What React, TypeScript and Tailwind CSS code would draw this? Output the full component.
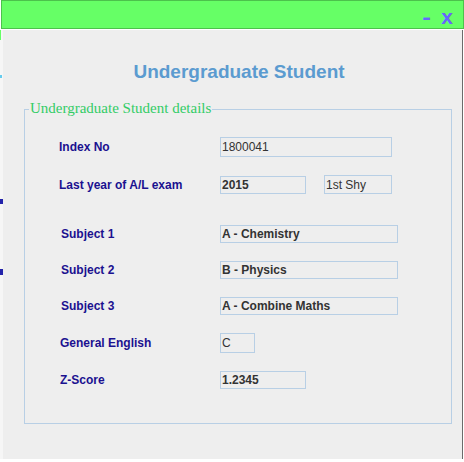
import React from "react";

type Row = {
  label: string;
  labelClass: string;
  rowClass: string;
  fields: { text: string; className: string }[];
};

const rows: Row[] = [
  {
    label: "Index No",
    labelClass: "pl-[34px] w-[195px]",
    rowClass: "mt-[27px] h-[20px] items-center",
    fields: [{ text: "1800041", className: "w-[172px] h-[20px]" }],
  },
  {
    label: "Last year of A/L exam",
    labelClass: "pl-[34px] w-[195px] self-center",
    rowClass: "mt-[18px] h-[19px] items-end",
    fields: [
      { text: "2015", className: "w-[86px] h-[18px] font-bold" },
      { text: "1st Shy", className: "ml-[18px] w-[68px] h-[19px]" },
    ],
  },
  {
    label: "Subject 1",
    labelClass: "pl-[36px] w-[195px]",
    rowClass: "mt-[31px] h-[18px] items-center",
    fields: [{ text: "A - Chemistry", className: "w-[178px] h-[18px] font-bold" }],
  },
  {
    label: "Subject 2",
    labelClass: "pl-[36px] w-[195px]",
    rowClass: "mt-[18px] h-[18px] items-center",
    fields: [{ text: "B - Physics", className: "w-[178px] h-[18px] font-bold" }],
  },
  {
    label: "Subject 3",
    labelClass: "pl-[36px] w-[195px]",
    rowClass: "mt-[18px] h-[18px] items-center",
    fields: [{ text: "A - Combine Maths", className: "w-[178px] h-[18px] font-bold" }],
  },
  {
    label: "General English",
    labelClass: "pl-[35px] w-[195px]",
    rowClass: "mt-[18px] h-[20px] items-center",
    fields: [{ text: "C", className: "w-[35px] h-[20px]" }],
  },
  {
    label: "Z-Score",
    labelClass: "pl-[35px] w-[195px]",
    rowClass: "mt-[18px] h-[18px] items-center",
    fields: [{ text: "1.2345", className: "w-[86px] h-[18px] font-bold" }],
  },
];

export default function App() {
  return (
    <div className="w-[464px] h-[462px] bg-white flex flex-col overflow-hidden font-['Liberation_Sans',Arial,sans-serif]">
      {/* title bar */}
      <div className="h-[29px] ml-[1px] bg-[#66ff66] border border-[#4cc24c] flex items-baseline justify-end pr-[10px] pt-[5px] text-[#6666ff] font-bold text-[21px] leading-[22px]">
        <span className="scale-x-125">-</span>
        <span className="ml-[11px]">x</span>
      </div>
      <div className="h-[1px]" />

      <div className="flex h-[429px]">
        <div className="w-[3px] bg-[#f6f6f6] flex flex-col">
          <div className="h-[10px] w-[1px] bg-[#66ff66]" />
          <div className="mt-[35px] h-[3px] w-[2px] bg-[#66ccee]" />
          <div className="mt-[121px] h-[5px] w-[3px] bg-[#2222aa]" />
          <div className="mt-[65px] h-[6px] w-[3px] bg-[#2222aa]" />
        </div>

        <div className="w-[459px] bg-[#eeeeee] flex flex-col">
          <div className="mt-[31px] h-[22px] pl-[13px] text-center text-[19px] leading-[22px] font-bold text-[#5b9bd0]">
            Undergraduate Student
          </div>

          <div className="relative mt-[26px] ml-[21px] w-[428px] h-[315px] border border-[#b8cfe5] flex flex-col">
            <span className="absolute -top-[10px] left-[4px] px-[1px] bg-[#eeeeee] text-[15px] leading-[17px] text-[#33cc66] font-['Liberation_Serif','Times_New_Roman',serif]">
              Undergraduate Student details
            </span>

            {rows.map((r) => (
              <div key={r.label} className={`flex ${r.rowClass}`}>
                <div className={`shrink-0 text-[12px] font-bold text-[#1b1190] ${r.labelClass}`}>
                  {r.label}
                </div>
                {r.fields.map((f) => (
                  <div
                    key={f.text}
                    className={`shrink-0 border border-[#b8cfe5] pl-[1px] flex items-center text-[12px] text-[#333333] ${f.className}`}
                  >
                    {f.text}
                  </div>
                ))}
              </div>
            ))}
          </div>
        </div>

        <div className="w-[1px] bg-[#6b6b6b]" />
        <div className="w-[1px] bg-white" />
      </div>
    </div>
  );
}
